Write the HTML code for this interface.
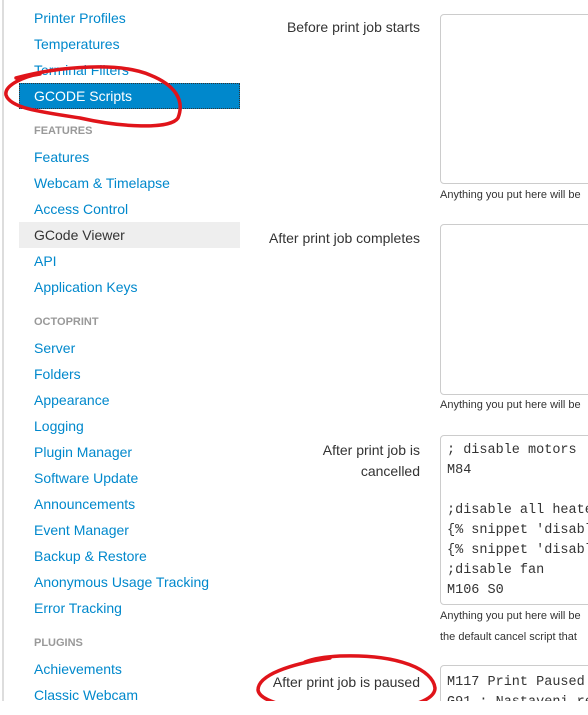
<!DOCTYPE html>
<html><head><meta charset="utf-8"><style>
body{margin:0;width:588px;height:715px;overflow:hidden;background:#fff;font-family:"Liberation Sans",Arial,sans-serif;position:relative}
.clip{position:absolute;left:0;top:0;width:588px;height:701px;overflow:hidden}
.vl{position:absolute;left:2px;top:0;width:2px;height:701px;background:#ddd}
.i{position:absolute;left:34px;font-size:14px;line-height:18px;color:#0088cc;white-space:nowrap}
.h{position:absolute;left:34px;font-size:11px;font-weight:bold;color:#999;line-height:14px}
.bg{position:absolute;left:19px;width:221px;height:26px}
.lab{position:absolute;right:168px;font-size:14px;line-height:21px;color:#333;text-align:right}
.ta{position:absolute;left:440px;width:170px;border:1px solid #ccc;border-radius:4px;background:#fff}
.help{position:absolute;left:440px;font-size:11px;color:#333;white-space:nowrap;line-height:21px}
pre{margin:0;position:absolute;left:447px;font-family:"Liberation Mono","DejaVu Sans Mono",monospace;font-size:13.5px;line-height:20px;color:#333}
</style></head><body>
<div class="clip">
<div class="vl"></div>
<div class="bg" style="top:83px;background:#0088cc;outline:1px dotted #333;outline-offset:-1px"></div>
<div class="bg" style="top:222px;background:#eee"></div>
<div class="i" style="top:9px">Printer Profiles</div>
<div class="i" style="top:35px">Temperatures</div>
<div class="i" style="top:61px">Terminal Filters</div>
<div class="i" style="top:87px;color:#fff">GCODE Scripts</div>
<div class="h" style="top:124px">FEATURES</div>
<div class="i" style="top:148px">Features</div>
<div class="i" style="top:174px">Webcam &amp; Timelapse</div>
<div class="i" style="top:200px">Access Control</div>
<div class="i" style="top:226px;color:#333">GCode Viewer</div>
<div class="i" style="top:252px">API</div>
<div class="i" style="top:278px">Application Keys</div>
<div class="h" style="top:315px">OCTOPRINT</div>
<div class="i" style="top:339px">Server</div>
<div class="i" style="top:365px">Folders</div>
<div class="i" style="top:391px">Appearance</div>
<div class="i" style="top:417px">Logging</div>
<div class="i" style="top:443px">Plugin Manager</div>
<div class="i" style="top:469px">Software Update</div>
<div class="i" style="top:495px">Announcements</div>
<div class="i" style="top:521px">Event Manager</div>
<div class="i" style="top:547px">Backup &amp; Restore</div>
<div class="i" style="top:573px">Anonymous Usage Tracking</div>
<div class="i" style="top:599px">Error Tracking</div>
<div class="h" style="top:636px">PLUGINS</div>
<div class="i" style="top:660px">Achievements</div>
<div class="i" style="top:686px">Classic Webcam</div>

<div class="lab" style="top:17px">Before print job starts</div>
<div class="ta" style="top:14px;height:168px"></div>
<div class="help" style="top:185px">Anything you put here will be</div>
<div class="lab" style="top:228px">After print job completes</div>
<div class="ta" style="top:224px;height:169px"></div>
<div class="help" style="top:395px">Anything you put here will be</div>
<div class="lab" style="top:440px">After print job is<br>cancelled</div>
<div class="ta" style="top:435px;height:168px"></div>
<pre style="top:441px">; disable motors
M84

;disable all heaters
{% snippet 'disable_hotends' %}
{% snippet 'disable_bed' %}
;disable fan
M106 S0</pre>
<div class="help" style="top:606px">Anything you put here will be</div>
<div class="help" style="top:627px">the default cancel script that</div>
<div class="lab" style="top:672px">After print job is paused</div>
<div class="ta" style="top:665px;height:60px"></div>
<pre style="top:673px">M117 Print Paused ;
G91 ; Nastaveni rel</pre>
<svg width="588" height="715" style="position:absolute;left:0;top:0" fill="none" stroke="#e0141a" stroke-width="3.5" stroke-linecap="round">
<path d="M16 78 C60 66 120 62 150 75 C175 85 185 100 178 118 C170 130 120 127 80 118 C40 112 10 108 6 95 C4 85 25 76 40 74"/>
<path d="M330 658 C290 664 258 675 258 690 C260 705 310 712 360 711 C410 710 435 700 435 688 C433 670 400 654 340 656 C320 657 310 660 305 662"/>
</svg>
</div>
</body></html>
